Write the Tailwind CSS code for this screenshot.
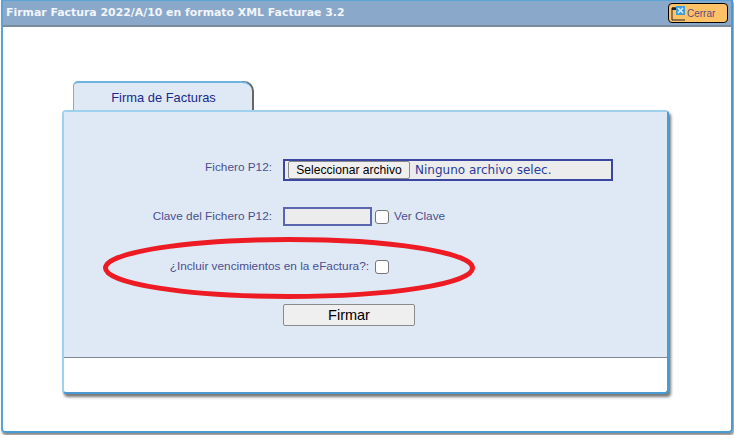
<!DOCTYPE html>
<html>
<head>
<meta charset="utf-8">
<title>Firmar Factura</title>
<script src="https://cdn.jsdelivr.net/npm/@tailwindcss/browser@4"></script>
</head>
<body class="h-[435px] w-[734px] overflow-hidden bg-white font-['Liberation_Sans',sans-serif]">
  <div class="relative mx-px mt-0 h-[433px] w-[732px] rounded-b-[4px] border-2 border-t-0 border-[#4a9bd1] border-l-[#5aa3d6] shadow-[1px_2px_2px_#888]">
    <!-- header -->
    <div class="flex h-[27px] items-center justify-between border-t border-b-2 border-t-[#5aa3d6] border-b-[#7d8a99] bg-[#8aa8ca] pl-[3px] pr-[3px]">
      <span class="font-['DejaVu_Sans',sans-serif] text-[10.9px] font-bold whitespace-nowrap text-[#f2f5fa]">Firmar Factura 2022/A/10 en formato XML Facturae 3.2</span>
      <button class="flex h-[20px] w-[60px] items-center gap-[1px] rounded-[4px] border border-black bg-[#ffc266] pl-[2px] text-[10px] text-[#5a4a80]">
        <svg class="h-[15px] w-[15px] shrink-0" viewBox="0 0 15 15">
          <path d="M1 14V2h4" fill="none" stroke="#222" stroke-width="1"/>
          <rect x="1" y="1.5" width="4" height="2.5" fill="#222"/>
          <path d="M1 14h13" stroke="#222"/>
          <rect x="5" y="0" width="9" height="9" fill="#3f9ed8"/>
          <path d="M7 2l5 5M12 2l-5 5" stroke="#d9eefa" stroke-width="1.6"/>
        </svg>
        <span>Cerrar</span>
      </button>
    </div>

    <!-- body -->
    <div class="pl-[59px] pt-[54px]">
      <div class="relative z-10 ml-[11px] flex h-[29px] w-[179px] items-center justify-center rounded-tl-[5px] rounded-tr-[10px] border-t-2 border-l border-[#6fb3e0] bg-[#dfe9f5] pt-[2px] pl-[1px] text-[12.9px] text-[#1a2a8c] shadow-[2px_0_0_#666]">Firma de Facturas</div>

      <div class="relative h-[284px] w-[607px] rounded-[4px] border-2 border-[#4a9bd1] border-t-[#9fd0ee] border-l-[#9fd0ee] bg-white shadow-[2px_3px_3px_#777]">
        <div class="h-[246px] border-b border-[#7f8a99] bg-[#dfe9f5]">
          <form class="grid grid-cols-[208px_auto] content-start items-center gap-x-[11px] pt-[47px] text-[11.8px] text-[#4a4f8f]">
            <label class="h-[22px] pr-0 text-right leading-[16px]">Fichero P12:</label>
            <div class="flex h-[22px] w-[330px] items-center border-2 border-[#3a46a0] bg-[#ececec] pl-[3px]">
              <button type="button" class="h-[18px] w-[122px] rounded-[2px] border border-[#8a8a8a] bg-[#efefef] text-[12.1px] leading-none text-black">Seleccionar archivo</button>
              <span class="ml-[5px] font-['DejaVu_Sans',sans-serif] text-[12px] text-[#2a3a9c]">Ninguno archivo selec.</span>
            </div>

            <label class="mt-[26px] text-right">Clave del Fichero P12:</label>
            <div class="mt-[26px] flex items-center gap-[3px]">
              <input type="text" class="h-[19px] w-[89px] border-2 border-[#5a66b0] bg-[#ececec]">
              <span class="h-[14px] w-[14px] rounded-[3px] border border-[#777] bg-white"></span>
              <span class="ml-[2px]">Ver Clave</span>
            </div>

            <label class="col-span-2 mt-[32px] flex items-center">
              <span class="w-[305px] text-right whitespace-nowrap">¿Incluir vencimientos en la eFactura?:</span>
              <span class="ml-[6px] h-[14px] w-[14px] rounded-[3px] border border-[#777] bg-white"></span>
            </label>

            <div class="col-start-2 mt-[28px]">
              <button type="button" class="h-[22px] w-[132px] rounded-[2px] border border-[#8a8a8a] bg-[#efefef] pt-[2px] text-[14.5px] leading-none text-black">Firmar</button>
            </div>
          </form>
        </div>
      </div>
    </div>

    <!-- red ellipse drawn on top of the screenshot -->
    <svg class="absolute left-[99px] top-[236px]" width="374" height="64" viewBox="0 0 374 64">
      <ellipse cx="187" cy="32" rx="183.5" ry="28.5" fill="none" stroke="#ed1c24" stroke-width="5"/>
    </svg>
  </div>
</body>
</html>
